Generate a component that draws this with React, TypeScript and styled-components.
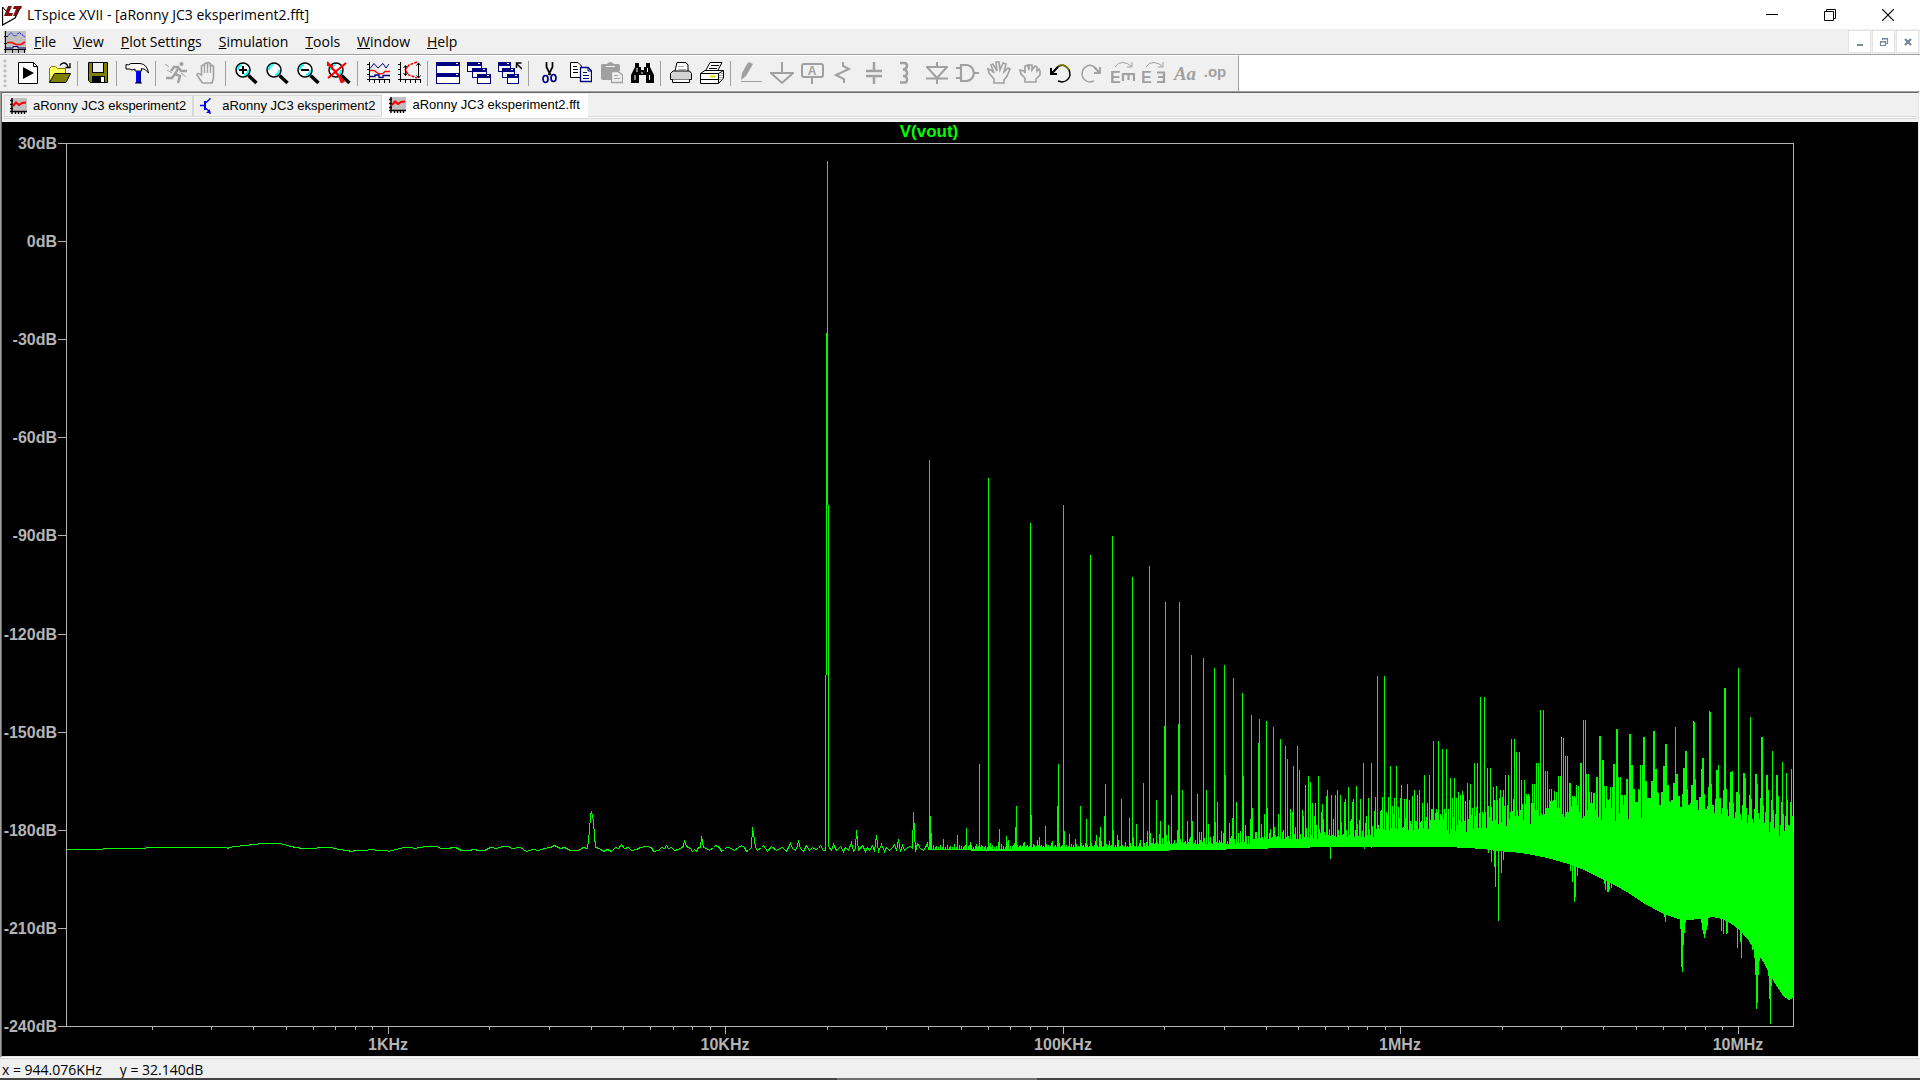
import React from "react";
import styled, { createGlobalStyle, css } from "styled-components";

const GlobalStyle = createGlobalStyle`
  * { box-sizing: border-box; }
  html, body { margin: 0; background: #fff; }
  button { font: inherit; color: inherit; background: none; border: 0; padding: 0; }
`;

const uiFont = css`font-family: "Open Sans", "Noto Sans", sans-serif;`;

const Shell = styled.div`
  ${uiFont}
  min-height: 100vh;
  display: flex;
  flex-direction: column;
  background: #fff;
  color: #000;
  font-size: 14px;
`;

const TitleBar = styled.header`
  height: 29px;
  display: flex;
  align-items: center;
  padding: 0 3px 0 2px;
  background: #fff;
`;
const AppTitle = styled.h1`
  flex: 1;
  margin: 0 0 0 5px;
  font-size: 14px;
  line-height: 20px;
  font-weight: 400;
`;
const CaptionButton = styled.button`
  width: 58px;
  height: 28px;
  display: grid;
  place-items: center;
`;

const MenuBar = styled.nav`
  height: 26px;
  display: flex;
  align-items: center;
  padding-left: 4px;
  background: #f0f0f0;
  border-bottom: 1px solid #a0a0a0;
`;
const MenuItem = styled.button`
  padding: 0 9px 0 8px;
  line-height: 24px;
  &::first-letter { text-decoration: underline; }
`;
const ChildButtons = styled.div`
  margin-left: auto;
  align-self: stretch;
  display: flex;
  gap: 1px;
  padding: 1px 1px 0 0;
  background: #f0f0f0;
`;
const ChildButton = styled.button`
  width: 23px;
  height: 23px;
  display: grid;
  place-items: center;
  background: #fff;
  border: 1px solid #e3e3e3;
`;

const ToolbarRow = styled.div`
  height: 36px;
  display: flex;
  background: #fff;
`;
const Toolbar = styled.div`
  display: flex;
  align-items: center;
  padding: 0 7px 1px 0;
  background: #f0f0f0;
  border-top: 1px solid #fff;
  border-right: 1px solid #a0a0a0;
`;
const Grip = styled.span`
  width: 8px;
  height: 28px;
  margin-right: 4px;
  background: radial-gradient(circle at 5px 2px, #bdbdbd 1px, transparent 2px) 0 0 / 8px 5px;
`;
const Tool = styled.button`
  width: 31px;
  height: 30px;
  display: grid;
  place-items: center;
`;
const Divider = styled.span`
  width: 8px;
  height: 25px;
  background: linear-gradient(#a0a0a0, #a0a0a0) 3px 0 / 1px 100% no-repeat;
`;

const Frame = styled.main`
  flex: 1;
  display: flex;
  border: 1px solid;
  border-color: #a0a0a0 #fff #fff #a0a0a0;
`;
const FrameInner = styled.div`
  flex: 1;
  min-width: 0;
  display: flex;
  flex-direction: column;
  background: #000;
  border: 1px solid;
  border-color: #696969 #e3e3e3 #e3e3e3 #696969;
`;
const TabStrip = styled.div`
  height: 29px;
  padding: 0 2px 3px;
  background: #f0f0f0;
  display: flex;
  flex-direction: column;
  justify-content: flex-end;
`;
const Tabs = styled.div`
  display: flex;
  align-items: flex-end;
`;
const Tab = styled.button<{ $active?: boolean }>`
  display: flex;
  align-items: center;
  gap: 6px;
  height: ${(p) => (p.$active ? 24 : 21)}px;
  margin-bottom: ${(p) => (p.$active ? -2 : 0)}px;
  padding: ${(p) => (p.$active ? "0 7px 4px 6px" : "0 6px 0 5px")};
  font-family: "Liberation Sans", Arial, sans-serif;
  font-size: 13px;
  line-height: 18px;
  background: ${(p) => (p.$active ? "#fff" : "#f0f0f0")};
  border: 1px solid ${(p) => (p.$active ? "#fff" : "#d9d9d9")};
  border-bottom: 0;
  z-index: ${(p) => (p.$active ? 1 : 0)};
`;
const TabEdge = styled.div`
  height: 3px;
  background: #fff;
  border: 1px solid #d9d9d9;
`;

const PlotSvg = styled.svg`
  display: block;
  width: 100%;
  height: auto;
  background: #000;
  text {
    font-family: "Liberation Sans", Arial, sans-serif;
    font-weight: 700;
    font-size: 16px;
  }
  text.trace { font-size: 17px; }
`;

const StatusBar = styled.footer`
  height: 20px;
  display: flex;
  gap: 18px;
  padding: 3px 2px 0;
  line-height: 16px;
  background: #f0f0f0;
  border-top: 1px solid #d7d7d7;
`;
const TaskbarEdge = styled.div`
  height: 2px;
  background: linear-gradient(#707070, #707070) 837px 0 / 200px 100% no-repeat #444;
`;

/* ---------- spectrum data, in plot pixels of the full window ---------- */

const lowBand: [number, number][] = [
  [66,849],[102,849],[103,848],[145,848],[146,847],[226,847],[227,848],[229,847],[235,846],[244,845],[254,844],[261,843],[278,843],[284,844],[290,846],[296,847],[302,848],[316,848],[317,847],[330,847],[339,849],[346,850],[352,851],[353,850],[367,850],[368,849],[374,849],[375,850],[387,850],[388,851],[395,849],[404,847],[411,847],[414,848],[420,847],[425,846],[436,846],[441,848],[448,848],[452,847],[455,847],[461,850],[469,850],[473,849],[479,850],[484,850],[490,847],[496,848],[502,846],[507,846],[512,848],[520,847],[523,849],[526,851],[532,849],[538,850],[544,848],[550,847],[554,845],[560,848],[564,847],[570,850],[578,850],[583,847],[587,848],[589,830],[590,815],[591,811],[592,815],[593,822],[595,847],[599,848],[603,851],[607,849],[611,851],[615,847],[618,848],[621,844],[624,848],[628,847],[631,850],[636,849],[640,847],[645,846],[651,847],[653,851],[658,850],[661,847],[664,848],[666,845],[668,848],[671,847],[674,850],[678,849],[681,847],[683,846],[684,840],[686,846],[690,848],[692,851],[694,849],[696,851],[698,847],[700,847],[701,836],[703,847],[706,848],[709,850],[713,847],[715,845],[719,847],[721,851],[724,849],[726,847],[729,847],[734,850],[738,847],[741,845],[744,847],[746,851],[748,850],[751,847],[752,827],[753,833],[755,847],[757,850],[761,847],[763,845],[767,851],[771,846],[776,850],[779,848],[782,847],[784,849],[786,851],[788,847],[790,843],[792,848],[795,850],[797,845],[798,841],[800,848],[803,851],[806,845],[809,850],[812,847],[815,849],[818,848],[820,845],[823,850],[825,850],
];

const afterPeak: [number, number][] = [
  [828,846],[831,850],[833,844],[836,850],[840,846],[843,851],[845,847],[848,850],[851,842],[853,851],[855,848],[856,830],[858,850],[862,845],[865,851],[867,847],[869,850],[872,845],[874,851],[876,835],[878,851],[881,844],[884,851],[886,847],[889,850],[892,847],[894,844],[896,850],[898,839],[900,851],[902,845],[904,850],[907,847],[910,846],[912,848],[913,812],[915,851],[917,843],[920,848],[923,850],[925,847],[927,843],[928,850],
];

// [column, top] of every line that stands out of the floor
const sparse: [number, number][] = [
  [929,460],[930,816],[931,833],[933,845],[940,845],[943,839],[947,845],[954,844],[957,835],[959,845],[965,845],[966,828],[969,845],[970,842],[971,845],[976,844],[979,764],[981,845],[988,478],[990,843],[992,845],[998,842],[999,829],[1001,844],[1006,836],[1007,842],[1008,840],[1014,843],[1015,827],[1016,806],[1023,843],[1024,842],[1030,523],[1031,815],[1033,844],[1037,840],[1039,837],[1045,826],[1046,844],[1051,843],[1052,841],[1057,806],[1058,764],[1059,843],[1063,505],[1064,831],[1069,834],[1071,844],[1075,839],[1076,844],[1080,806],[1081,843],[1085,843],[1086,819],[1090,555],[1091,843],[1095,841],[1096,835],[1099,837],[1100,827],[1101,841],[1104,816],[1105,784],[1106,844],[1109,841],[1112,536],[1113,830],[1117,835],[1118,840],[1121,799],[1125,842],[1129,818],[1130,843],[1132,577],[1133,837],[1136,824],[1139,843],[1140,840],[1143,783],[1144,843],[1146,842],[1147,831],[1149,566],[1150,833],[1151,843],[1153,838],[1156,800],[1157,842],[1159,834],[1160,821],[1162,838],[1164,726],[1165,602],[1166,835],[1168,825],[1169,841],[1171,795],[1174,840],[1177,830],[1178,724],[1179,602],[1180,839],[1182,790],[1184,842],[1185,841],[1187,821],[1189,839],[1190,837],[1191,655],[1192,821],[1195,840],[1197,794],[1199,832],[1200,840],[1201,832],[1203,658],[1204,838],[1206,790],[1208,824],[1210,837],[1213,836],[1214,668],[1215,822],[1217,802],[1219,840],[1221,831],[1223,833],[1224,665],[1225,775],[1227,841],[1229,823],[1230,838],[1231,836],[1232,818],[1233,678],[1234,839],[1236,802],[1238,833],[1240,831],[1242,693],[1243,776],[1245,825],[1246,836],[1248,836],[1250,819],[1251,715],[1252,808],[1253,839],[1255,832],[1256,832],[1257,838],[1258,743],[1259,719],[1261,824],[1262,837],[1264,814],[1266,721],[1267,808],[1269,833],[1270,829],[1271,838],[1273,727],[1274,827],[1275,835],[1277,836],[1278,814],[1280,739],[1281,839],[1282,832],[1283,830],[1285,746],[1287,759],[1288,836],[1290,809],[1292,812],[1293,766],[1294,834],[1295,827],[1297,746],[1299,770],[1300,834],[1302,810],[1303,816],[1305,785],[1306,828],[1308,776],[1310,782],[1311,835],[1312,803],[1314,816],[1315,803],[1316,825],[1318,776],[1319,829],[1320,833],[1321,812],[1322,804],[1323,819],[1324,832],[1326,796],[1327,790],[1329,829],[1331,795],[1333,819],[1335,795],[1337,790],[1338,830],[1340,795],[1341,822],[1343,834],[1344,802],[1345,799],[1346,830],[1348,787],[1350,821],[1351,819],[1352,802],[1353,799],[1355,830],[1356,786],[1357,824],[1359,820],[1360,799],[1362,831],[1363,763],[1365,823],[1366,816],[1368,798],[1369,829],[1371,763],[1372,826],[1374,811],[1375,797],[1377,676],[1378,825],[1380,811],[1381,810],[1382,797],[1384,676],[1386,812],[1387,815],[1388,797],[1390,766],[1392,806],[1393,814],[1394,798],[1396,766],[1398,807],[1399,818],[1400,798],[1401,785],[1403,827],[1404,799],[1405,818],[1406,799],[1407,784],[1409,800],[1410,821],[1411,824],[1412,796],[1414,790],[1415,821],[1416,821],[1417,795],[1419,790],[1420,822],[1421,821],[1422,803],[1424,775],[1425,821],[1426,817],[1427,803],[1429,775],[1430,820],[1431,809],[1432,809],[1433,741],[1434,820],[1435,813],[1436,809],[1437,812],[1438,741],[1439,820],
];

// tops of consecutive columns from 1440 to the right edge
const dense = [
  814,816,749,819,809,813,749,830,809,834,
  778,829,798,817,778,831,798,825,792,820,
  795,822,791,795,821,801,832,783,819,800,
  784,815,808,829,763,816,807,763,828,813,
  697,828,812,814,697,812,828,768,806,817,
  768,807,821,787,800,820,786,800,824,798,
  790,822,797,790,806,775,826,805,775,819,
  812,739,811,799,739,816,752,810,816,752,
  810,780,804,820,780,804,794,796,794,796,
  824,803,784,803,784,810,763,810,763,816,
  710,813,815,710,814,771,808,771,808,789,
  801,789,801,800,791,800,792,808,776,808,
  776,737,814,738,817,756,812,756,812,783,
  783,806,796,797,796,798,785,805,786,812,
  763,763,818,720,816,720,774,810,774,792,
  803,792,803,793,793,810,777,777,817,736,
  736,820,760,760,786,808,786,799,800,799,
  787,808,787,764,764,821,729,729,777,813,
  777,795,795,805,795,795,779,779,819,734,
  734,765,765,789,789,802,802,802,789,790,
  765,818,765,737,737,781,781,798,798,798,
  798,781,781,731,731,769,769,792,793,805,
  805,792,792,766,766,744,744,785,785,801,
  802,800,800,783,783,727,774,774,796,796,
  807,807,794,768,768,751,751,789,805,805,
  803,785,785,721,722,779,800,800,810,797,
  797,769,758,758,794,809,809,806,787,711,
  712,784,805,805,813,799,770,770,765,798,
  798,814,808,790,688,688,789,809,816,802,
  772,772,771,803,818,812,792,792,668,794,
  814,820,805,773,773,778,808,823,815,795,
  717,799,819,823,809,774,774,784,813,819,
  798,737,737,805,823,812,775,775,790,832,
  822,800,751,810,828,814,775,775,796,836,
  825,802,762,814,831,816,773,800,825,826,
  802,769,816,833,
];

const lowerEdge: [number, number][] = [
  [931,850],[1010,851],[1167,851],[1170,850],[1224,850],[1226,849],[1266,849],[1269,848],[1308,848],[1311,847],[1447,847],[1467,848],[1483,849],[1496,851],[1512,852],[1527,854],[1547,858],[1568,864],[1584,870],[1600,878],[1616,886],[1628,893],[1643,903],[1663,914],[1678,919],[1686,920],[1700,919],[1712,917],[1722,919],[1730,923],[1738,929],[1748,940],[1753,949],[1763,962],[1768,972],[1773,981],[1778,989],[1783,996],[1788,1000],[1793,998],
];

const drops: Record<number, number> = {
  1330:859,1364:849,1371:848,1488:853,1491:862,1494:867,1495:887,1498:921,1501:873,1503:860,
  1570:871,1572:882,1574:902,1575:897,1577:876,1604:884,1605:890,1607:892,1608:892,1609:890,1611:888,
  1664:917,1665:922,1680:929,1681:967,1682:972,1683:945,1684:933,1685:923,
  1701:923,1702:930,1703:934,1704:938,1705:934,1706:930,1707:926,1721:931,1723:934,1726:934,1727:933,
  1737:948,1740:942,1741:958,1752:950,1754:958,1755:975,1756:1009,1757:1003,1758:975,1759:961,
  1768:976,1769:999,1770:1024,1771:986,
};

const tops = new Map<number, number>(sparse);
dense.forEach((top, i) => tops.set(1440 + i, top));

const lowerAt = (x: number) => {
  const i = Math.max(1, lowerEdge.findIndex((p) => p[0] >= x));
  const [x0, y0] = lowerEdge[i - 1];
  const [x1, y1] = lowerEdge[i];
  return Math.round(y0 + ((y1 - y0) * (x - x0)) / (x1 - x0));
};
const floorAt = (x: number) => {
  if (x < 1012) return 847 + [0, 2, -1, 2, 0, -1, 2][x % 7];
  const ripple = [0, 1, -1, 1, 0, -1, 1][x % 7];
  const level = x < 1150 ? 846 : x < 1250 ? 843 : x < 1320 ? 838 : x < 1375 ? 836 : 829;
  return level + ripple;
};

const toLine = (pts: [number, number][]) => pts.map(([x, y]) => `${x + 0.5},${y + 0.5}`).join(" ");

let columns = "M827.5 161V505M826.5 333V675M825.5 675V850M828.5 505V847";
for (let x = 929; x <= 1793; x++) {
  const top = tops.get(x) ?? floorAt(x);
  const bottom = drops[x] ?? lowerAt(x);
  columns += `M${x + 0.5} ${top}V${bottom}`;
}

const dbLabels = [30, 0, -30, -60, -90, -120, -150, -180, -210, -240];
const decades = [
  { label: "1KHz", exp: 3 },
  { label: "10KHz", exp: 4 },
  { label: "100KHz", exp: 5 },
  { label: "1MHz", exp: 6 },
  { label: "10MHz", exp: 7 },
];
const freqX = (logF: number) => Math.floor(388 + 337.5 * (logF - 3));
const minorTicks: number[] = [];
for (let d = 2; d <= 7; d++)
  for (let m = 2; m <= 9; m++) {
    const x = freqX(d + Math.log10(m));
    if (x > 66 && x < 1793) minorTicks.push(x);
  }

function Spectrum() {
  return (
    <PlotSvg viewBox="2 122 1916 934" role="img" aria-label="FFT of V(vout)">
      <g stroke="#b4b4b4" fill="none" shapeRendering="crispEdges">
        <path d="M66.5 143.5H1793.5V1026.5H66.5Z" />
        {dbLabels.map((db, i) => (
          <path key={db} d={`M58 ${Math.round(143 + i * 98.11) + 0.5}H66`} />
        ))}
        {minorTicks.map((x) => (
          <path key={x} d={`M${x + 0.5} 1027V1030`} />
        ))}
        {decades.map((d) => (
          <path key={d.exp} d={`M${freqX(d.exp) + 0.5} 1027V1034`} />
        ))}
      </g>
      <g fill="#b4b4b4" textAnchor="end">
        {dbLabels.map((db, i) => (
          <text key={db} x={57} y={Math.round(149 + i * 98.11)}>{db}dB</text>
        ))}
      </g>
      <g fill="#b4b4b4" textAnchor="middle">
        {decades.map((d) => (
          <text key={d.exp} x={freqX(d.exp)} y={1050}>{d.label}</text>
        ))}
      </g>
      <text className="trace" x={929} y={137} fill="#0f0" textAnchor="middle">V(vout)</text>
      <g stroke="#0f0" fill="none" shapeRendering="crispEdges">
        <polyline points={toLine(lowBand)} />
        <polyline points={toLine(afterPeak)} />
        <path d={columns} />
      </g>
    </PlotSvg>
  );
}

/* ---------- icons ---------- */

const G = "#a0a0a0";
const NAVY = "#000080";

const Lens = ({ children }: { children?: React.ReactNode }) => (
  <>
    <circle cx="9" cy="9" r="7" fill="#fff" stroke="#000" strokeWidth="1.5" />
    <path d="M4 9a5 5 0 0 1 4-5M14 9a5 5 0 0 1-4 5" stroke="#0ff" strokeWidth="2" fill="none" />
    <path d="M14.500 14.500L22.500 22" stroke="#000" strokeWidth="3.500" />
    {children}
  </>
);
const Win = ({ x, y, w = 12, h = 9 }: { x: number; y: number; w?: number; h?: number }) => (
  <>
    <rect x={x + 0.5} y={y + 0.5} width={w - 1} height={h - 1} fill="#fff" stroke={NAVY} />
    <rect x={x} y={y} width={w} height={4} fill={NAVY} />
    <path d={`M${x + w - 4} ${y + 1.5}h2`} stroke="#fff" />
  </>
);
const Axes = () => <path d="M3.500 1V21M1 18.500H24M1 3.500H3M1 8.500H3M1 13.500H3M8.500 18V22M13.500 18V22M18.500 18V22M23.500 18V22" stroke="#000" shapeRendering="crispEdges" />;

const icons: Record<string, React.ReactNode> = {
  "New simulation": <><path d="M2.500 1.500H17.500L21.500 5.500V22.500H2.500Z" fill="#fff" stroke="#000" /><path d="M17.500 1.500V5.500H21.500" stroke="#000" fill="none" /><path d="M7 6V18L18 12Z" fill="#000" /></>,
  Open: <><path d="M2.500 21V7.500L4.500 5.500H8.500L10.500 7.500H18.500V12" fill="#ffff60" stroke="#808000" /><path d="M2.500 21.500L7.500 12.500H23.500L19 21.500Z" fill="#808000" stroke="#000" /><path d="M13 4.500C15 1 19 1 21 5.500M23 2V6.500H18.500" stroke="#000" fill="none" strokeWidth="1.300" /></>,
  Save: <><path d="M2.500 1.500H21.500V21.500H4.500L2.500 19.500Z" fill="#808000" stroke="#000" /><rect x="6.500" y="1.500" width="11" height="10" fill="#f0f0f0" stroke="#000" /><rect x="6" y="15" width="13" height="7" fill="#000" /><rect x="15" y="16" width="3" height="5" fill="#fff" /></>,
  "Control panel": <><path d="M1 3.500Q3 5 6 2.500H15Q22 3 23.500 12Q20 7 16.500 7.500V10H10V8L7 9L5 8L1 8Z" fill="#fff" stroke="#000" /><path d="M11 10H16V22H11Z" fill="#0000ff" /><path d="M15 10V22" stroke={NAVY} strokeWidth="2" /><path d="M10 22h7" stroke="#000" /></>,
  Run: <g stroke={G} fill="none" strokeWidth="2.500"><path d="M15 6L11 13L16 15L14 22M11 13L8 17H2M9 6H14L17 10H23M10 6L7 10" /><circle cx="17.500" cy="3" r="2" fill={G} stroke="none" /><path d="M1 3L5 6M3 9L8 12M17 12l5 4" strokeWidth="1" /></g>,
  Halt: <><path d="M7 21.500L2 14Q2 11 6.500 14V5Q8.500 3 9.500 5V3Q11 1 12.500 3V2Q14 1 15.500 3V5Q17 3.500 18.500 5.500V17L17 22H8Z" fill="#f0f0f0" stroke={G} strokeWidth="1.600" /><path d="M9.500 4V12M12.500 2V12M15.500 3V12" stroke={G} strokeWidth="1.300" /></>,
  "Zoom in": <Lens><path d="M9 5V13M5 9H13" stroke="#000" strokeWidth="2" /></Lens>,
  "Zoom area": <Lens />,
  "Zoom out": <Lens><path d="M5 9H13" stroke="#000" strokeWidth="2" /></Lens>,
  "Zoom full": <Lens><path d="M0 1L17 21M19 2L1 17M0 4L6 5M13 17l2 5" stroke="#f00" strokeWidth="2.200" /></Lens>,
  "Autorange": <><Axes /><path d="M4 7.500L8 2.500L12 7L17 2.500L20 7L23 3" stroke={NAVY} fill="none" /><path d="M4 9.500L8 9.500L13 13L17 12.500L19 10.500H24" stroke="#f00" fill="none" strokeWidth="1.300" /><path d="M4 15.500H9V14H13V16.500H17V14.500H24" stroke={NAVY} fill="none" strokeWidth="1.300" /></>,
  "Plot limits": <><Axes /><path d="M20 1L12 4L8 9L12 14L20 17" stroke="#f00" fill="none" strokeDasharray="3 1" strokeWidth="1.500" /><path d="M8.500 5V14M6.500 7L8.500 4.500L10.500 7M6.500 12L8.500 14.500L10.500 12M21.500 2V17M19.500 4.500L21.500 2L23.500 4.500M19.500 14.500L21.500 17L23.500 14.500" stroke="#000" fill="none" /></>,
  "Tile windows": <><Win x={0} y={1} w={24} h={12} /><Win x={0} y={12} w={24} h={11} /></>,
  "Cascade windows": <><Win x={0} y={1} w={15} h={10} /><Win x={5} y={7} w={15} h={10} /><Win x={10} y={13} w={14} h={10} /></>,
  "Close all windows": <><Win x={0} y={1} w={13} h={10} /><Win x={4} y={7} w={13} h={10} /><Win x={9} y={13} w={12} h={10} /><path d="M24 8L18.500 2.500M18.500 7V2H23.500" stroke="#000" fill="none" strokeWidth="1.500" /></>,
  Cut: <><path d="M9.500 1V6L13.500 14M15.500 1V6L11.500 14" stroke="#000" strokeWidth="1.700" fill="none" /><ellipse cx="8.500" cy="18" rx="2.500" ry="3.500" stroke={NAVY} strokeWidth="1.700" fill="none" /><ellipse cx="16.500" cy="17" rx="2.500" ry="3.500" stroke={NAVY} strokeWidth="1.700" fill="none" /></>,
  Copy: <><path d="M2.500 1.500H10L13.500 5V16.500H2.500Z" fill="#fff" stroke="#000" /><path d="M5 5.500h4M5 8.500h5M5 11.500h5" stroke="#000" /><path d="M12.500 6.500H20L23.500 10V20.500H12.500Z" fill="#fff" stroke={NAVY} strokeWidth="1.300" /><path d="M20 6v4h4M15 11.500h4M15 14.500h6M15 17.500h6" stroke={NAVY} fill="none" /></>,
  Paste: <><path d="M2 4Q2 3 4 3H8Q11-1 15 3H19Q21 3 21 5V10H12V19H4Q2 19 2 17Z" fill={G} /><path d="M7 5.500h9" stroke="#f0f0f0" /><path d="M12.500 10.500H19L23.500 14V21.500H12.500Z" fill="#f0f0f0" stroke={G} strokeWidth="1.300" /><path d="M15 14.500h4M15 17.500h6" stroke={G} /></>,
  Find: <><path d="M5 2h4v4h2v3h3V6h2V2h4v4l4 8v8h-8v-8h-7v8H1v-8l4-8Z" fill="#000" /><path d="M7 7v4M17.500 7v4M5 14v5M19.500 14v5M12 11v2" stroke="#fff" /></>,
  Print: <><path d="M6 10L8 1.500H17L19 4V10" fill="#fff" stroke="#000" /><path d="M9 5.500h6M9 8.500h8" stroke="#aaa" /><path d="M1.500 12.500L4 10H20.500L22.500 12.500V18.500H1.500Z" fill="#d4d4d4" stroke="#000" /><path d="M3.500 18.500V21.500H20.500V18.500" fill="#fff" stroke="#000" /></>,
  "Print setup": <><path d="M6 9L10 1.500H22L18 9" fill="#fff" stroke="#000" /><path d="M11 4.500h8M9 7.500h8" stroke="#000" /><path d="M.5 12.500L5 9.500H23.500V17L18.500 22.500H.5Z" fill="#fff" stroke="#000" /><path d="M.5 12.500H18.500V22M18.500 12.500L23.500 9.500M.5 18.500H18.500" stroke="#000" fill="none" /><path d="M20 14v6M22 12v6" stroke="#555" strokeDasharray="1 1" /><path d="M10 15.500h5" stroke="#e0e000" strokeWidth="2" /></>,
  Wire: <><path d="M10 1L14 3L7 15L2 19L3 12L8 3Z" fill={G} /><path d="M2 20.500H23" stroke={G} /></>,
  Ground: <path d="M12 1V12M1 12H23L12 22Z" stroke={G} strokeWidth="2" fill="none" />,
  "Label net": <><rect x="1" y="3" width="21" height="13" rx="2" stroke={G} strokeWidth="2" fill="none" /><path d="M11 16V23" stroke={G} strokeWidth="2" /><text x="11" y="14" textAnchor="middle" fontFamily="Liberation Sans, sans-serif" fontWeight="700" fontSize="12" fill={G}>A</text></>,
  Resistor: <path d="M11 1V5L17 8L4 14L12 18V22" stroke={G} strokeWidth="2" fill="none" />,
  Capacitor: <path d="M11 1V9M3 10H19M3 15H19M11 15V23" stroke={G} strokeWidth="2.500" />,
  Inductor: <path d="M6 2H10Q13 2 13 5T9 8.500Q13 8.500 13 12T9 15Q13 15 13 18.500T10 21.500H6" stroke={G} strokeWidth="2.500" fill="none" />,
  Diode: <path d="M12 1V6M1 6H23M2 6L12 17L22 6M1 17.500H23M12 17V23" stroke={G} strokeWidth="2" fill="none" />,
  Component: <path d="M0 7H5M0 17H5M4 4H11Q17 5 18 12Q17 19 11 20H4M5 4V20M18 12H23" stroke={G} strokeWidth="2.200" fill="none" />,
  Move: <path d="M7 22V18L2 12L1 8L4 9L7 12L4 4L6 3L10 10L9 1L12 1L13 9L16 2L19 3L17 11L21 7L23 8L20 15L17 19V22Z" stroke={G} strokeWidth="1.600" fill="none" />,
  Drag: <path d="M7 21V17L3 13L2 9L6 10L7 12V5L10 4L11 9V4L14 4V9L17 5L19 6V10L21 8L22 10V14L18 18V21Z" stroke={G} strokeWidth="1.600" fill="none" />,
  Undo: <><path d="M5 11Q9 3 15 4.500Q21 7 21 14Q20 20 13 21L9 20" stroke="#000" strokeWidth="1.500" fill="none" /><path d="M9 5Q15 2 20 9" stroke="#808000" strokeWidth="1.500" fill="none" /><path d="M2 7V13H8M2 13L9 6" fill="none" stroke="#000" strokeWidth="2" /></>,
  Redo: <><path d="M18 11Q14 3 8 4.500Q2 7 2 14Q3 20 10 21L14 20" stroke={G} strokeWidth="1.500" fill="none" /><path d="M20 6V12H14M20 12L14 6" fill="none" stroke={G} strokeWidth="1.800" /></>,
  Rotate: <><text x="-1" y="22" fontFamily="Liberation Sans, sans-serif" fontWeight="700" fontSize="16" fill={G}>E</text><path d="M11 13H24M12 12V20M17.500 12V19M23 12V20" stroke={G} strokeWidth="2.200" /><path d="M4 6Q7 1 12 1.500Q17 2 20 5M21 1V6H16" stroke={G} fill="none" /></>,
  Mirror: <><text x="-1" y="22" fontFamily="Liberation Sans, sans-serif" fontWeight="700" fontSize="16" fill={G}>E</text><path d="M15 11.500H22V21H15M16 16H21" stroke={G} strokeWidth="2.200" fill="none" /><path d="M4 6Q7 1 12 1.500Q17 2 20 5M21 1V6H16" stroke={G} fill="none" /></>,
  Text: <text x="12" y="19" textAnchor="middle" fontFamily="Liberation Serif, serif" fontStyle="italic" fontWeight="700" fontSize="19" fill={G}>Aa</text>,
  "SPICE directive": <text x="11" y="16" textAnchor="middle" fontFamily="Liberation Sans, sans-serif" fontWeight="700" fontSize="15" fill={G}>.op</text>,
};

const toolGroups = [
  ["New simulation", "Open"],
  ["Save"],
  ["Control panel"],
  ["Run", "Halt"],
  ["Zoom in", "Zoom area", "Zoom out", "Zoom full"],
  ["Autorange", "Plot limits"],
  ["Tile windows", "Cascade windows", "Close all windows"],
  ["Cut", "Copy", "Paste", "Find"],
  ["Print", "Print setup"],
  ["Wire", "Ground", "Label net", "Resistor", "Capacitor", "Inductor", "Diode", "Component", "Move", "Drag", "Undo", "Redo", "Rotate", "Mirror", "Text", "SPICE directive"],
];

const Logo = () => (
  <svg width="20" height="22" viewBox="0 0 20 22" aria-hidden="true">
    <path d="M.5 3V21L13 14L19 2" fill="none" stroke="#000" strokeWidth="1.300" />
    <path d="M.5 3L5 8" stroke="#000" />
    <path d="M6 2H10L7 9H11L10 12H2ZM12 2H20L19 5H17L14 12H11L14 5H11Z" fill="#7c1010" />
  </svg>
);
const PlotDocIcon = () => (
  <svg width="22" height="22" viewBox="0 0 22 22" aria-hidden="true">
    <rect width="22" height="22" fill="#c0c0c0" />
    <path d="M1.500 0V22M0 18.500H22M0 5.500H3M0 12.500H3M8.500 18V22M14.500 18V22M20.500 18V22" stroke="#000" />
    <path d="M3 6L7 1.500L11 5.500L15 1.500L21 6" stroke="#00f" fill="none" strokeDasharray="2 1" />
    <path d="M3 11.500H8L12 13.500H17L21 11" stroke="#f00" fill="none" strokeWidth="1.500" />
    <path d="M2 17L9 17V15.500H14V17H22" stroke={NAVY} fill="none" />
  </svg>
);
const WaveTabIcon = () => (
  <svg width="17" height="16" viewBox="0 0 17 16" aria-hidden="true">
    <rect x="1" width="16" height="14" fill="#c0c0c0" />
    <path d="M2 0V16M0 13.500H17M0 2.500H3M0 6.500H3M0 10.500H3M5.500 13V16M8.500 13V16M11.500 13V16M14.500 13V16" stroke="#000" strokeWidth="1.400" />
    <path d="M3 8L6 4.500L9 7L12 5L16 4.500" stroke="#f00" fill="none" strokeWidth="2" />
  </svg>
);
const SchematicTabIcon = () => (
  <svg width="17" height="16" viewBox="0 0 17 16" aria-hidden="true">
    <path d="M1 7.500H6M11 0V1L6 5.500M6 9.500L11 14V16" stroke="#00f" fill="none" strokeWidth="1.300" />
    <path d="M6 3V12" stroke="#00f" strokeWidth="2" />
    <path d="M11 11V15H7Z" fill="#00f" />
  </svg>
);

const tabs = [
  { label: "aRonny JC3 eksperiment2", icon: <WaveTabIcon /> },
  { label: "aRonny JC3 eksperiment2", icon: <SchematicTabIcon /> },
  { label: "aRonny JC3 eksperiment2.fft", icon: <WaveTabIcon />, active: true },
];

export default function App() {
  return (
    <Shell>
      <GlobalStyle />
      <TitleBar>
        <Logo />
        <AppTitle>LTspice XVII - [aRonny JC3 eksperiment2.fft]</AppTitle>
        <CaptionButton aria-label="Minimize">
          <svg width="12" height="12" viewBox="0 0 12 12"><path d="M0 5.500H12" stroke="#000" /></svg>
        </CaptionButton>
        <CaptionButton aria-label="Restore">
          <svg width="12" height="12" viewBox="0 0 12 12"><path d="M.5 2.500H9.500V11.500H.5ZM2.500 2V.5H11.500V9.500H10" stroke="#000" fill="none" /></svg>
        </CaptionButton>
        <CaptionButton aria-label="Close">
          <svg width="12" height="12" viewBox="0 0 12 12"><path d="M0 0L12 12M12 0L0 12" stroke="#000" strokeWidth="1.200" /></svg>
        </CaptionButton>
      </TitleBar>
      <MenuBar aria-label="Main menu">
        <PlotDocIcon />
        {["File", "View", "Plot Settings", "Simulation", "Tools", "Window", "Help"].map((m) => (
          <MenuItem key={m}>{m}</MenuItem>
        ))}
        <ChildButtons>
          <ChildButton aria-label="Minimize plot">
            <svg width="10" height="10" viewBox="0 0 10 10"><path d="M2 8H8" stroke="#778899" strokeWidth="2" /></svg>
          </ChildButton>
          <ChildButton aria-label="Restore plot">
            <svg width="10" height="10" viewBox="0 0 10 10"><path d="M1.500 4.500H6.500V8.500H1.500ZM1 5H7M3.500 3V1.500H8.500V6.500H7M3 2H9" stroke="#778899" fill="none" strokeWidth="1.200" /></svg>
          </ChildButton>
          <ChildButton aria-label="Close plot">
            <svg width="10" height="10" viewBox="0 0 10 10"><path d="M2 2L8 8M8 2L2 8" stroke="#778899" strokeWidth="2.400" /></svg>
          </ChildButton>
        </ChildButtons>
      </MenuBar>
      <ToolbarRow>
        <Toolbar role="toolbar" aria-label="Tools">
          <Grip />
          {toolGroups.map((group, i) => (
            <React.Fragment key={i}>
              {i > 0 && <Divider />}
              {group.map((name) => (
                <Tool key={name} aria-label={name}>
                  <svg width="24" height="24" viewBox="0 0 24 24">{icons[name]}</svg>
                </Tool>
              ))}
            </React.Fragment>
          ))}
        </Toolbar>
      </ToolbarRow>
      <Frame>
        <FrameInner>
          <TabStrip>
            <Tabs>
              {tabs.map((t, i) => (
                <Tab key={i} $active={t.active}>{t.icon}{t.label}</Tab>
              ))}
            </Tabs>
            <TabEdge />
          </TabStrip>
          <Spectrum />
        </FrameInner>
      </Frame>
      <StatusBar>
        <span>x = 944.076KHz</span>
        <span>y = 32.140dB</span>
      </StatusBar>
      <TaskbarEdge />
    </Shell>
  );
}
